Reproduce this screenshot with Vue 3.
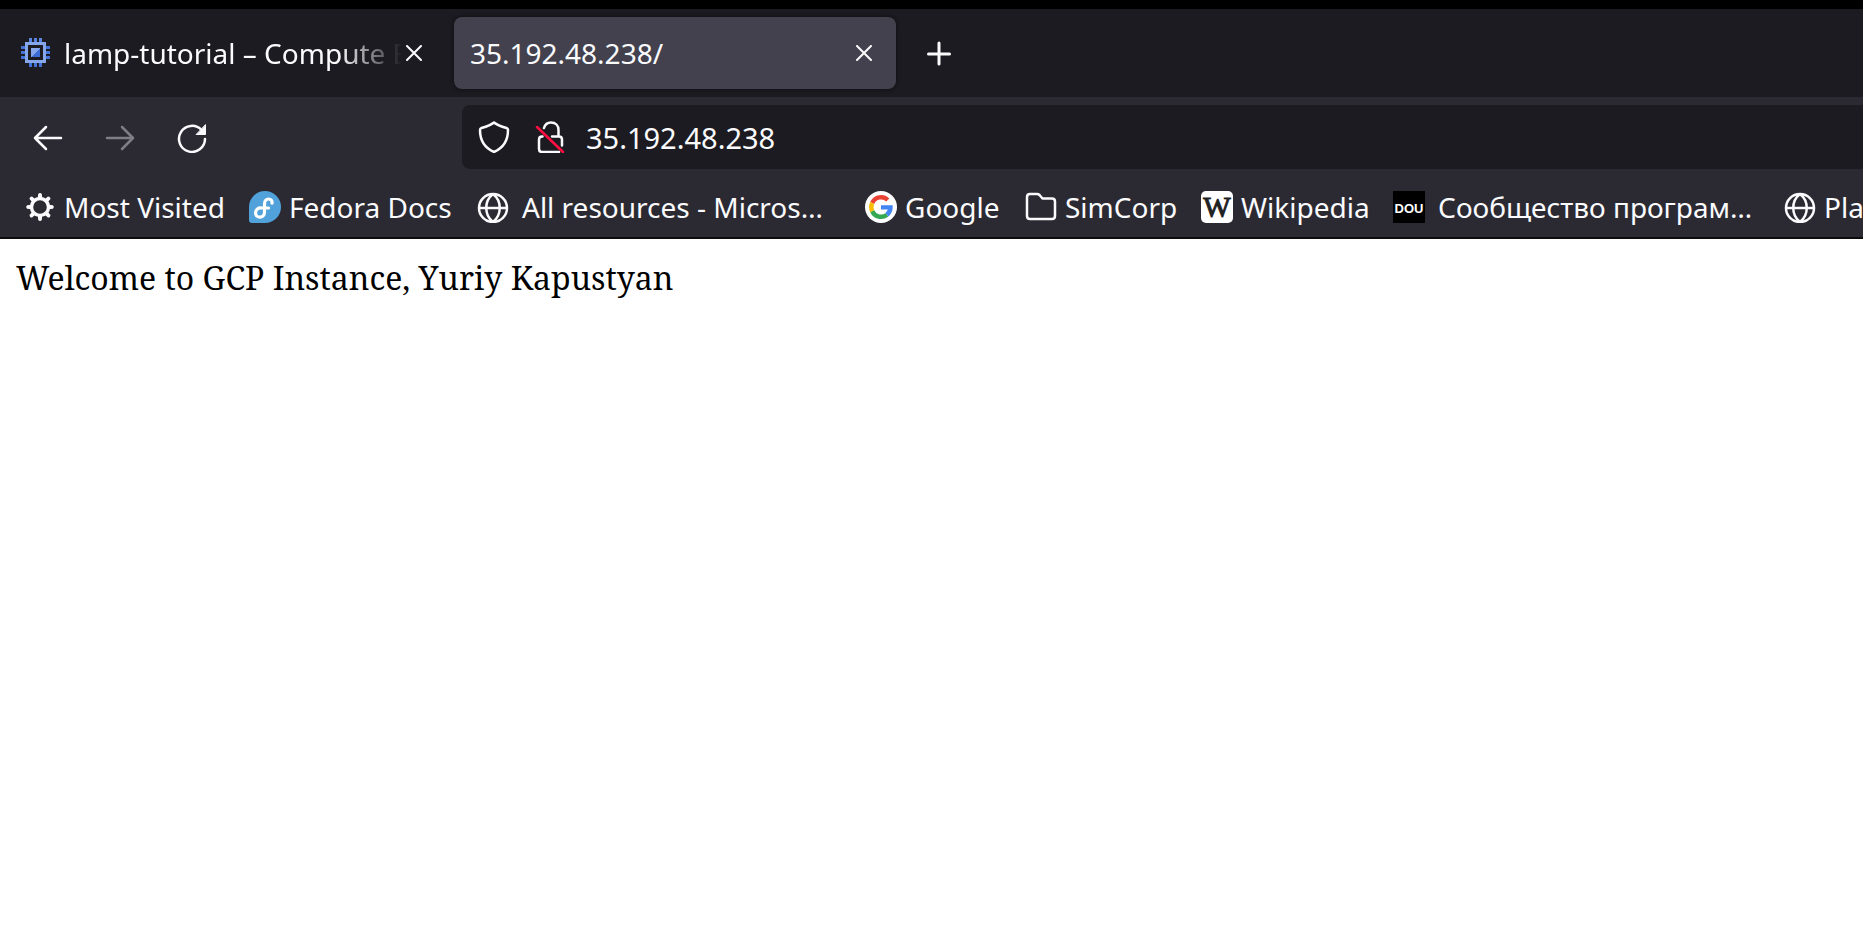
<script setup>
import { ref } from 'vue'

const address = ref('35.192.48.238')
const bookmarks = [
  { icon: 'gear', label: 'Most Visited' },
  { icon: 'fedora', label: 'Fedora Docs' },
  { icon: 'globe', label: 'All resources - Micros…', wide: true },
  { icon: 'google', label: 'Google' },
  { icon: 'folder', label: 'SimCorp' },
  { icon: 'wiki', label: 'Wikipedia' },
  { icon: 'dou', label: 'Сообщество програм…', wide: true },
  { icon: 'globe', label: 'Pla' }
]
const teeth = [0, 45, 90, 135, 180, 225, 270, 315]
</script>

<template>
  <div class="browser">
    <header class="chrome">
      <div class="tabs" role="tablist">
        <div class="tab" role="tab" aria-selected="false">
          <svg class="favicon" viewBox="0 0 32 32" shape-rendering="crispEdges" aria-hidden="true">
            <g fill="#5a85e0">
              <path d="M9 1h3v4H9zM14 1h3v4h-3zM19 1h3v4h-3z" />
              <path fill="#4473d8" d="M9 26h3v4H9zM14 26h3v4h-3zM19 26h3v4h-3zM1 9h4v3H1zM1 14h4v3H1zM1 19h4v3H1zM26 9h4v3h-4zM26 14h4v3h-4zM26 19h4v3h-4z" />
            </g>
            <path fill="#86a6ec" fill-rule="evenodd" d="M5 5h21v21H5zM8 8v15h15V8z" />
            <path fill="#86a6ec" d="M11 11h9v9h-9z" />
            <path fill="#3c6bd6" d="M20 11v9h-9z" />
          </svg>
          <span class="title faded">lamp-tutorial – Compute E</span>
          <button class="close" type="button" aria-label="Close tab">
            <svg viewBox="0 0 16 16" aria-hidden="true"><path d="M1 1l14 14M15 1L1 15" /></svg>
          </button>
        </div>
        <div class="tab active" role="tab" aria-selected="true">
          <span class="title">35.192.48.238/</span>
          <button class="close" type="button" aria-label="Close tab">
            <svg viewBox="0 0 16 16" aria-hidden="true"><path d="M1 1l14 14M15 1L1 15" /></svg>
          </button>
        </div>
        <button class="new-tab" type="button" aria-label="New tab">
          <svg viewBox="0 0 24 24" aria-hidden="true"><path d="M11 2v21M0.500 13h21" /></svg>
        </button>
      </div>

      <nav class="navbar" aria-label="Navigation">
        <div class="nav-buttons">
          <button type="button" aria-label="Back">
            <svg viewBox="0 0 32 32" aria-hidden="true"><path d="M29 17H3M14 6L3 17l11 11" /></svg>
          </button>
          <button type="button" aria-label="Forward" disabled>
            <svg viewBox="0 0 32 32" aria-hidden="true"><path d="M3 17h26M18 6l11 11-11 11" /></svg>
          </button>
          <button type="button" aria-label="Reload">
            <svg viewBox="0 0 32 32" aria-hidden="true">
              <path d="M25.500 9A13 13 0 1 0 29 18" />
              <path class="solid" d="M29.500 4v9.500h-9z" />
            </svg>
          </button>
        </div>
        <div class="urlbar">
          <svg class="shield" viewBox="0 0 32 32" aria-hidden="true">
            <path d="M16 1.500C13 4 7 6 3.500 7Q2 7.500 2 9C2 19 7 27 16 31C25 27 30 19 30 9Q30 7.500 28.500 7C25 6 19 4 16 1.500z" />
          </svg>
          <svg class="lock" viewBox="0 0 32 32" aria-hidden="true">
            <path d="M10 7C11 3.500 13.500 1.500 17 1.500C21.500 1.500 24.500 4.500 24.500 9v6M8.500 15.500H8Q5 15.500 5 18.500V28Q5 31 8 31H25M18 15.500h7q3 0 3 3v6" />
            <path class="slash" d="M3 6l26 25" />
          </svg>
          <input v-model="address" type="text" aria-label="Address" spellcheck="false" />
        </div>
      </nav>

      <nav class="bookmarks" aria-label="Bookmarks">
        <a v-for="(item, i) in bookmarks" :key="i" class="bookmark" :class="{ wide: item.wide }" href="#">
          <svg v-if="item.icon === 'gear'" class="icon" viewBox="0 0 32 32" aria-hidden="true">
            <circle cx="16" cy="16" r="8.500" fill="none" stroke="#fbfbfe" stroke-width="3.400" />
            <path v-for="a in teeth" :key="a" d="M13.800 7.500L14.200 3Q16 1.200 17.800 3L18.200 7.500z" fill="#fbfbfe" :transform="`rotate(${a} 16 16)`" />
          </svg>
          <svg v-else-if="item.icon === 'fedora'" class="icon" viewBox="0 0 32 32" aria-hidden="true">
            <path d="M16 0a16 16 0 0 1 0 32H3Q0 32 0 29V16A16 16 0 0 1 16 0z" fill="#51a2da" />
            <path d="M23 12.200C24 7 15.500 6 15.500 13V21C15.500 28 6.500 27.500 6.500 22C6.500 18.500 9.500 16.500 12.500 17H19.500" fill="none" stroke="#fff" stroke-width="3.200" stroke-linecap="round" />
          </svg>
          <svg v-else-if="item.icon === 'globe'" class="icon line" viewBox="0 0 32 32" aria-hidden="true">
            <circle cx="16" cy="17" r="14" />
            <path d="M2 17h28M16 3C7 10 7 24 16 31M16 3C25 10 25 24 16 31" />
          </svg>
          <svg v-else-if="item.icon === 'google'" class="icon" viewBox="0 0 32 32" aria-hidden="true">
            <circle cx="16" cy="16" r="16" fill="#fff" />
            <g fill="none" stroke-width="4.400">
              <path d="M7.200 12A9.700 9.700 0 0 1 22.800 9" stroke="#ea4335" />
              <path d="M7.200 12A9.700 9.700 0 0 0 7.200 20.200" stroke="#fbbc05" />
              <path d="M7.200 20.200A9.700 9.700 0 0 0 22 23.700" stroke="#34a853" />
              <path d="M22 23.700A9.700 9.700 0 0 0 25.500 16.400H16" stroke="#4285f4" />
            </g>
          </svg>
          <svg v-else-if="item.icon === 'folder'" class="icon line" viewBox="0 0 32 32" aria-hidden="true">
            <path d="M5 3h7q1.500 0 2.500 1l3 3.500H27q3 0 3 3V25q0 3-3 3H5q-3 0-3-3V6q0-3 3-3z" />
          </svg>
          <svg v-else-if="item.icon === 'wiki'" class="icon" viewBox="0 0 32 32" aria-hidden="true">
            <rect width="32" height="32" rx="5" fill="#fff" />
            <text class="wiki-letter" x="16" y="26" text-anchor="middle">W</text>
          </svg>
          <svg v-else class="icon" viewBox="0 0 32 32" aria-hidden="true">
            <rect width="32" height="32" />
            <text class="dou-letters" x="16" y="22" text-anchor="middle">DOU</text>
          </svg>
          <span>{{ item.label }}</span>
        </a>
      </nav>
    </header>
    <main class="page">Welcome to GCP Instance, Yuriy Kapustyan</main>
  </div>
</template>

<style>
body {
  margin: 0;
  background: #fff;
}
</style>

<style scoped>
.browser {
  overflow: hidden;
}
.chrome {
  border-top: 9px solid #000;
  border-bottom: 2px solid #0c0c0d;
  background: #2b2a33;
  color: #fbfbfe;
  font: 28px/40px "Noto Sans", "Open Sans", sans-serif;
}
button {
  display: flex;
  align-items: center;
  justify-content: center;
  flex: none;
  padding: 0;
  border: 0;
  background: none;
  color: inherit;
}
svg {
  display: block;
  flex: none;
}
.tabs {
  display: flex;
  align-items: center;
  gap: 8px;
  height: 88px;
  padding-left: 4px;
  background: #1c1b22;
}
.tab {
  display: flex;
  align-items: center;
  box-sizing: border-box;
  width: 442px;
  height: 72px;
  padding: 0 8px 0 16px;
  border-radius: 8px;
}
.tab.active {
  background: #42414d;
  box-shadow: 0 0 4px #0c0c0d;
}
.favicon {
  width: 32px;
  height: 32px;
  margin-right: 12px;
}
.title {
  flex: 1;
  min-width: 0;
  overflow: hidden;
  white-space: nowrap;
}
.faded {
  mask-image: linear-gradient(to right, #000 calc(100% - 64px), transparent);
}
.close {
  width: 48px;
  height: 48px;
  margin-left: -12px;
}
.close svg {
  width: 16px;
  height: 16px;
}
.close path,
.new-tab path {
  stroke: currentColor;
  stroke-width: 2;
  stroke-linecap: round;
}
.new-tab {
  width: 72px;
  height: 72px;
}
.new-tab svg {
  width: 24px;
  height: 24px;
  overflow: visible;
}
.new-tab path {
  stroke-width: 3;
}
.navbar {
  display: flex;
  align-items: center;
  padding: 8px 0 0 12px;
}
.nav-buttons {
  display: flex;
  width: 450px;
  flex: none;
}
.nav-buttons button {
  width: 72px;
  height: 64px;
}
.nav-buttons button:disabled {
  opacity: 0.4;
}
.nav-buttons svg,
.urlbar svg {
  width: 32px;
  height: 32px;
  fill: none;
  stroke: currentColor;
  stroke-width: 2.5;
  stroke-linecap: round;
  stroke-linejoin: round;
}
.nav-buttons .solid {
  fill: currentColor;
  stroke-width: 1;
}
.urlbar {
  display: flex;
  align-items: center;
  flex: 1;
  min-width: 0;
  height: 64px;
  padding-left: 16px;
  box-sizing: border-box;
  border-radius: 8px 0 0 8px;
  background: #1c1b22;
}
.lock {
  margin: 0 20px 0 24px;
}
.urlbar .slash {
  stroke: #ff0f40;
}
.urlbar input {
  flex: 1;
  min-width: 0;
  height: 48px;
  padding: 0;
  border: 0;
  outline: 0;
  background: none;
  color: inherit;
  font: inherit;
  font-size: 29px;
}
.bookmarks {
  display: grid;
  grid-template-columns: 225px 228px 388px 160px 176px 192px 391px 1fr;
  height: 68px;
  padding-left: 24px;
  overflow: hidden;
}
.bookmark {
  display: flex;
  align-items: center;
  gap: 8px;
  min-width: 0;
  padding-top: 8px;
  color: inherit;
  text-decoration: none;
  white-space: nowrap;
}
.bookmark.wide {
  gap: 13px;
}
.icon {
  width: 32px;
  height: 32px;
}
.line {
  fill: none;
  stroke: currentColor;
  stroke-width: 2.5;
  stroke-linejoin: round;
}
.wiki-letter {
  font: 29px "Liberation Serif", serif;
  fill: #202122;
  stroke: #202122;
  stroke-width: 1;
}
.dou-letters {
  font: bold 13px "Liberation Sans", sans-serif;
  fill: #fff;
}
.page {
  padding: 16px;
  color: #000;
  font: 32px/46px "Noto Serif", "DejaVu Serif Condensed", "DejaVu Serif", serif;
}
</style>
